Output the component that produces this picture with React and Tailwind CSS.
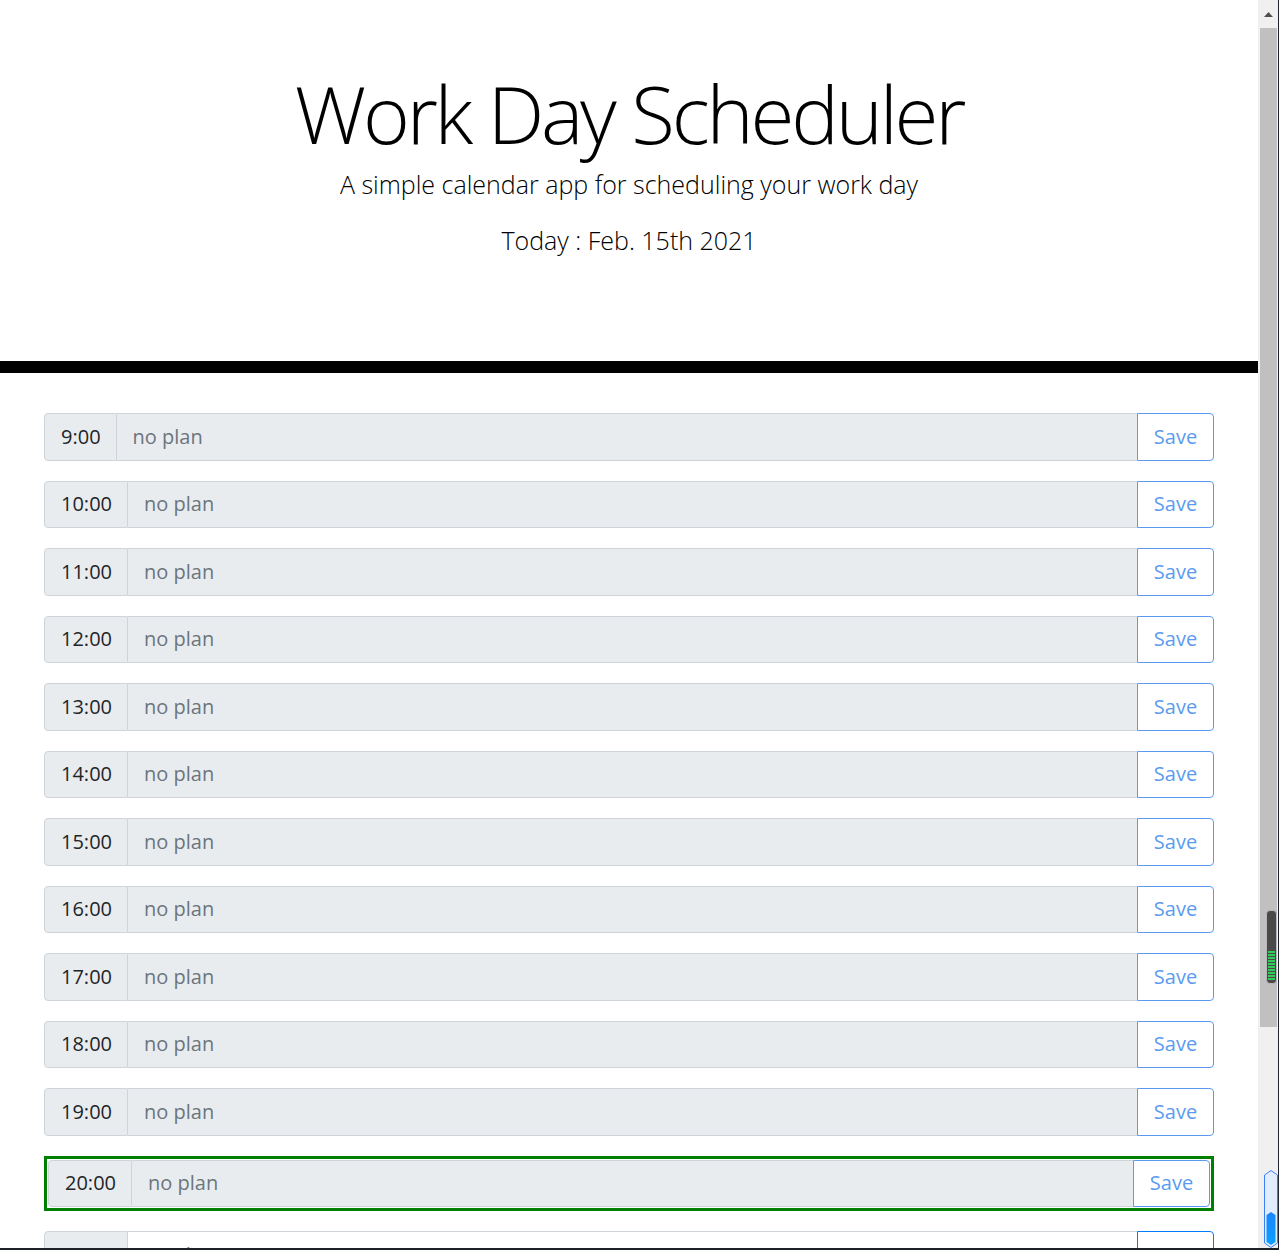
import React from "react";

const hours = ["9:00","10:00","11:00","12:00","13:00","14:00","15:00","16:00","17:00","18:00","19:00"];

function Row({ hour, future }) {
  return (
    <div className="flex h-[47.5px] w-full shrink-0 text-[20px]">
      <div className="flex items-center pl-4 pr-[15px] bg-[#e9ecef] border border-[#ced4da] rounded-l-[4px] text-[#212529]">{hour}</div>
      <div className={"flex-1 flex items-center px-4 border-y border-[#ced4da] text-[#6c757d] " + (future ? "bg-white" : "bg-[#e9ecef]")}>no plan</div>
      <button className={"w-[77px] flex items-center justify-center border rounded-r-[4px] bg-white " + (future ? "border-[#007bff] text-[#007bff]" : "border-[#5b9bef] text-[#5b9bef]")}>Save</button>
    </div>
  );
}

export default function App() {
  return (
    <div className="relative flex h-[1250px] w-[1279px] overflow-hidden bg-white" style={{ fontFamily: '"Open Sans", "Noto Sans", sans-serif' }}>
      <div className="w-[1258px] flex flex-col">
        <header className="h-[361px] shrink-0 flex flex-col items-center pt-[63px]">
          <h1 className="text-[80px] font-light leading-[100px] text-black tracking-[-3.2px]">Work Day Scheduler</h1>
          <p className="mt-[3px] text-[25px] font-light leading-[36px] text-black">A simple calendar app for scheduling your work day</p>
          <p className="mt-[20px] text-[25px] font-light leading-[36px] text-black">Today : Feb. 15th 2021</p>
        </header>
        <div className="h-[12px] shrink-0 bg-black" />
        <div className="w-[1170px] mx-auto pt-[40px] flex flex-col gap-[20px]">
          {hours.map(h => <Row key={h} hour={h} />)}
          <div className="shrink-0 border-[3px] border-[#008000] p-px">
            <Row hour="20:00" />
          </div>
          <Row hour="21:00" future />
        </div>
      </div>
      <div className="w-[21px] h-full bg-[#f0f0f0] flex flex-col border-r border-[#1f2430]">
        <div className="h-[28px] shrink-0 flex items-center justify-center pl-[1px]">
          <svg width="9" height="5" viewBox="0 0 9 5"><path d="M0 5 L4.5 0 L9 5 Z" fill="#505050" /></svg>
        </div>
        <div className="ml-[2px] w-[17px] h-[999px] shrink-0 bg-[#c0c0c0]" />
      </div>
      <div className="absolute left-[1266px] top-[910px] w-[11px] h-[74px] rounded-[4px] bg-[#4a4a4a] border border-[#b8b8b8] flex flex-col justify-end p-[1px] pb-[3px] gap-[1px]">
        {Array.from({ length: 10 }).map((_, i) => <div key={i} className="h-[2px] bg-[#2ecc5a]" />)}
      </div>
      <svg className="absolute left-[1264px] top-[1170px]" width="14" height="78" viewBox="0 0 14 78">
        <defs>
          <linearGradient id="bl" x1="0" y1="0" x2="0" y2="1">
            <stop offset="0" stopColor="#1c86ff" />
            <stop offset="1" stopColor="#0aa0ff" />
          </linearGradient>
        </defs>
        <path d="M7 0.5 L13.5 5 L13.5 73 L7 77.5 L0.5 73 L0.5 5 Z" fill="#e2ecff" stroke="#3b7ff5" strokeWidth="1" />
        <path d="M7 42 L11.5 45 L11.5 72 L7 75 L2.5 72 L2.5 45 Z" fill="url(#bl)" />
      </svg>
      <div className="absolute left-0 bottom-0 w-full h-[2px] bg-[#1e2228]" />
    </div>
  );
}
